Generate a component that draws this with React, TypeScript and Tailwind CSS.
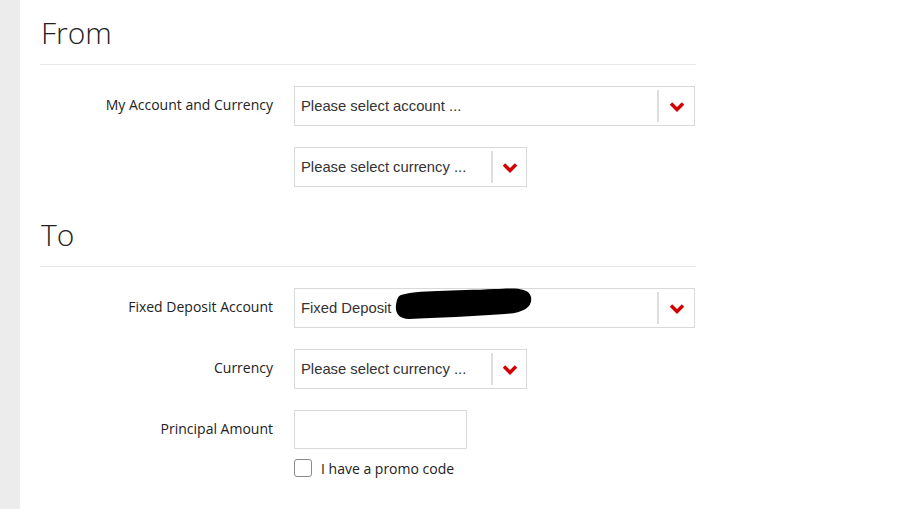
import React from "react";

function Chevron() {
  return (
    <svg width="16" height="11" viewBox="0 0 16 11" className="block">
      <polyline points="2,2.5 8,8.5 14,2.5" fill="none" stroke="#d40000" strokeWidth="3.4" strokeLinecap="butt" strokeLinejoin="miter" />
    </svg>
  );
}

function Select({ text, wide, children }: { text: string; wide?: boolean; children?: React.ReactNode }) {
  return (
    <div
      className={`relative flex h-[40px] border border-[#d9d9d9] bg-white ${wide ? "w-[401px]" : "w-[233px]"}`}
    >
      <div className="flex flex-1 items-center pl-[6px] text-[14.8px] text-[#333] [font-family:'Liberation_Sans',Arial,sans-serif]">
        {text}
      </div>
      <div className="my-[3px] w-[2px] bg-[#dedede]" />
      <div className={`flex items-center justify-center ${wide ? "w-[35px]" : "w-[33px]"}`}>
        <Chevron />
      </div>
      {children}
    </div>
  );
}

function Label({ children }: { children: React.ReactNode }) {
  return (
    <div className="flex h-[40px] items-center justify-end pb-[4px] text-[14px] font-medium text-[#222]">{children}</div>
  );
}

function Heading({ children }: { children: React.ReactNode }) {
  return (
    <div className="h-[65px] border-b border-[#e8e8e8] pl-[1px]">
      <div className="pt-[11px] text-[30px] font-light leading-[44px] text-[#222]">{children}</div>
    </div>
  );
}

export default function App() {
  return (
    <div className="flex h-[509px] w-[903px] bg-white [font-family:'Open_Sans','Noto_Sans',sans-serif]">
      <div className="w-[20px] shrink-0 bg-[#ececec]" />
      <div className="w-[656px] ml-[20px]">
        <Heading>From</Heading>
        <div className="mt-[21px] grid grid-cols-[233px_1fr] gap-x-[21px] gap-y-[21px]">
          <Label>My Account and Currency</Label>
          <Select text="Please select account ..." wide />
          <div />
          <Select text="Please select currency ..." />
        </div>
        <div className="mt-[15px]">
          <Heading>To</Heading>
        </div>
        <div className="mt-[21px] grid grid-cols-[233px_1fr] gap-x-[21px] gap-y-[21px]">
          <Label>Fixed Deposit Account</Label>
          <Select text="Fixed Deposit" wide>
            <svg
              className="pointer-events-none absolute left-[100px] top-[-2px]"
              width="138"
              height="33"
              viewBox="0 0 138 33"
            >
              <path
                d="M6 8 C20 3 60 4 100 2 C118 1 134 0 136 10 C138 20 128 26 110 27 C80 29 40 31 14 32 C4 32 0 26 1 18 C2 12 3 9 6 8 Z"
                fill="#000"
              />
            </svg>
          </Select>
          <Label>Currency</Label>
          <Select text="Please select currency ..." />
          <Label>Principal Amount</Label>
          <div>
            <div className="h-[39px] w-[173px] border border-[#d9d9d9] bg-white" />
            <div className="mt-[7px] flex items-center">
              <div className="h-[18px] w-[18px] rounded-[3px] border border-[#8a8a8a] bg-white" />
              <span className="ml-[9px] mt-[2px] text-[14px] font-medium text-[#222]">I have a promo code</span>
            </div>
          </div>
        </div>
      </div>
    </div>
  );
}
